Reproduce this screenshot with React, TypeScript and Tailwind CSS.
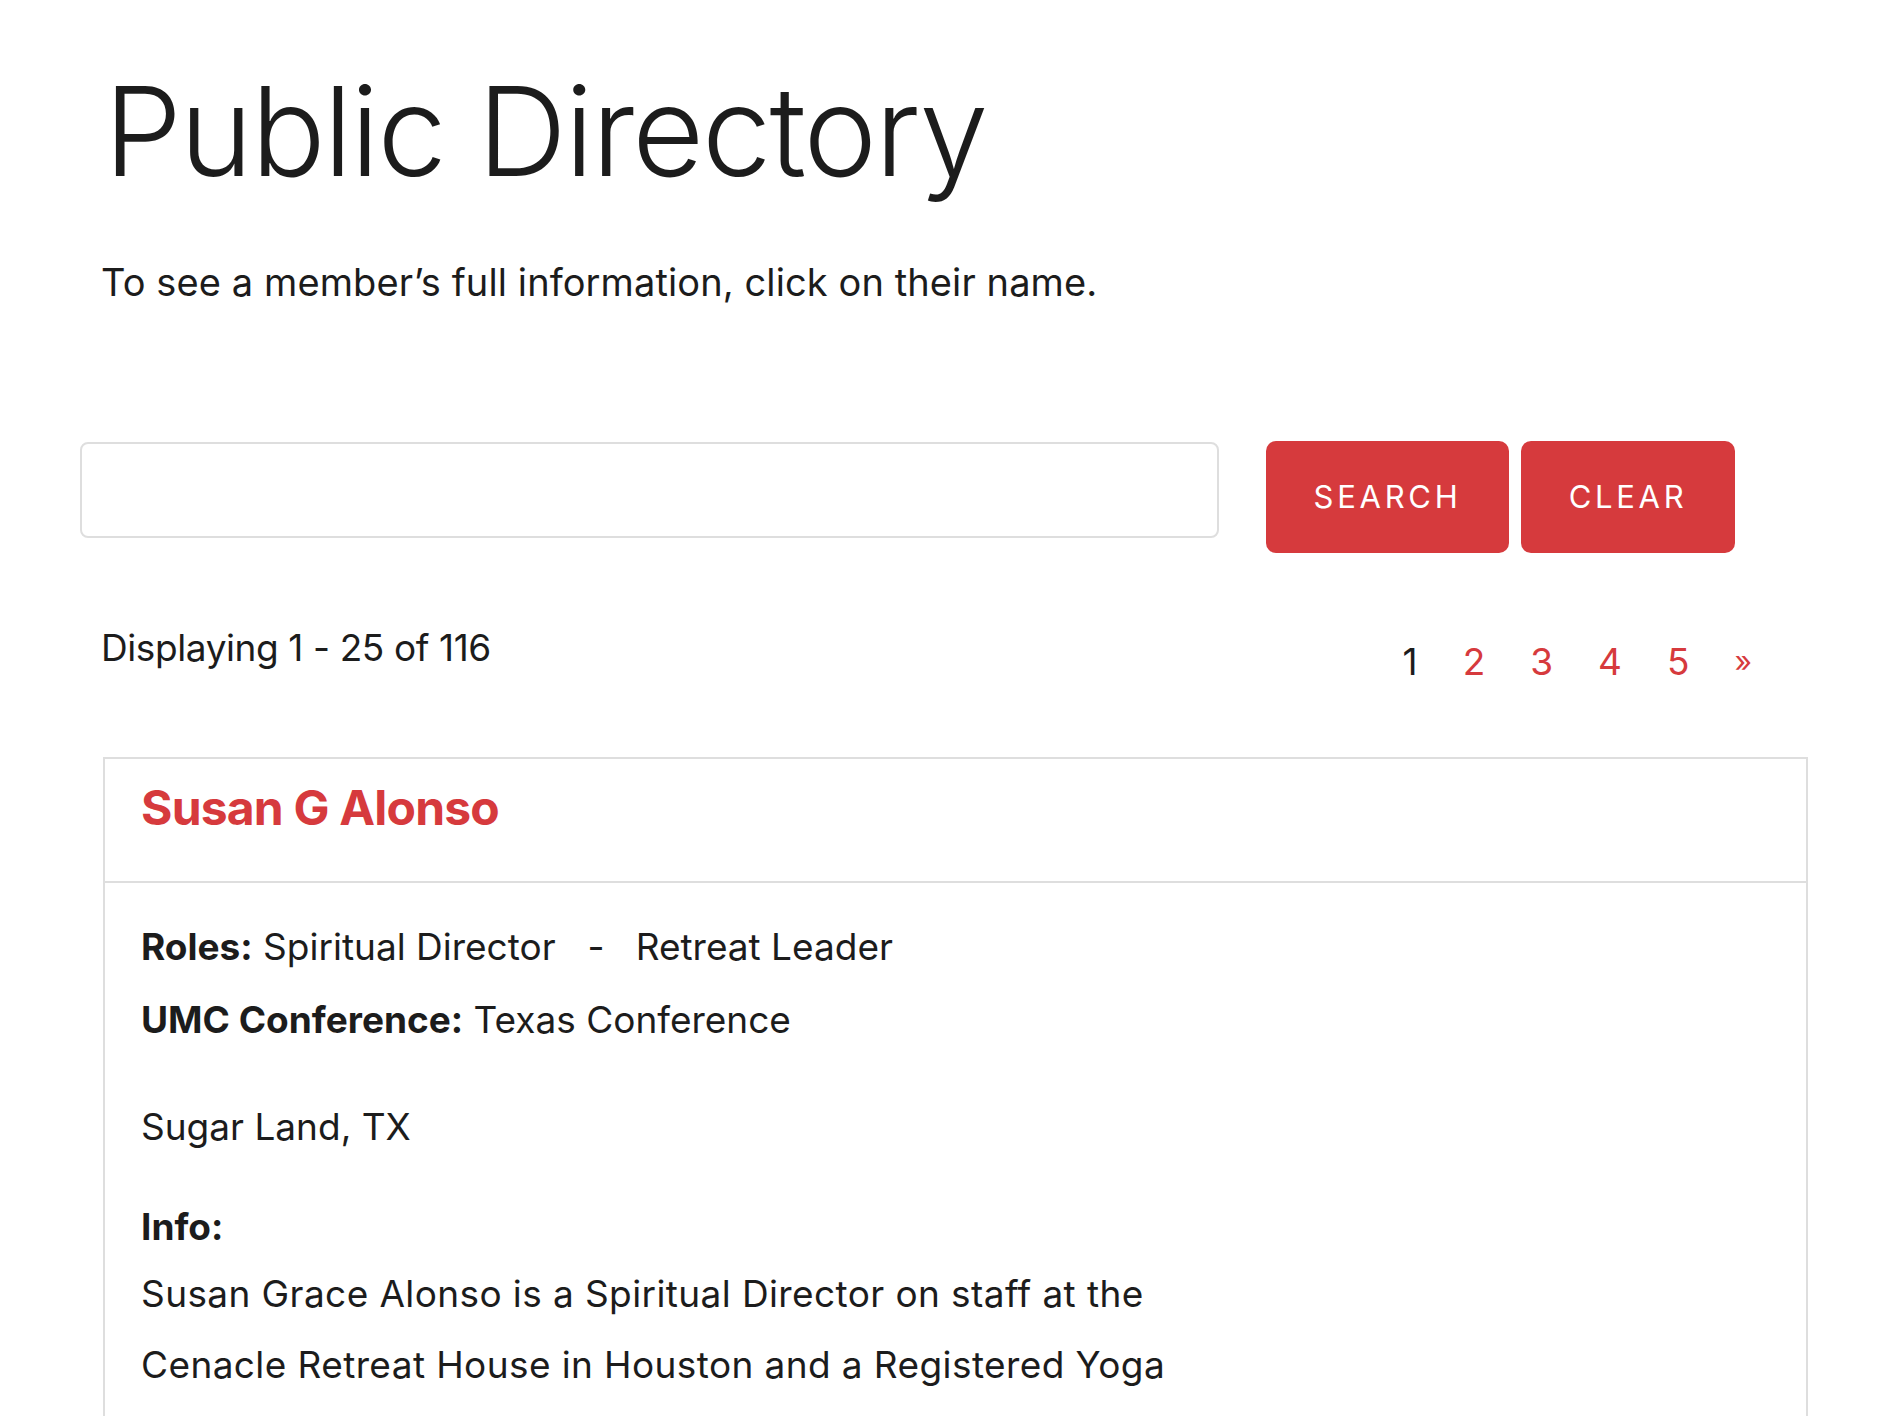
import React from "react";

const red = "text-[#d63a3d]";

const pages = ["2", "3", "4", "5"];

const InfoLine = ({ label, children }: { label: string; children: React.ReactNode }) => (
  <p className="text-[37px] leading-[37px]">
    <span className="font-bold">{label}</span> {children}
  </p>
);

export default function App() {
  return (
    <div className="min-h-screen bg-white font-['Inter',sans-serif] text-[#1c1c1c]">
      <div className="pl-[80px] pt-[69px]">
        <h1 className="ml-[24px] text-[124px] font-light leading-[124px] tracking-[-2px]">
          Public Directory
        </h1>
        <p className="ml-[21px] mt-[70px] text-[38px] leading-[38px] tracking-[0.1px]">
          To see a member’s full information, click on their name.
        </p>

        <div className="mt-[140px] flex items-start">
          <input
            type="text"
            className="mt-[1px] h-[96px] w-[1139px] rounded-[8px] border-2 border-[#dedede] bg-white outline-none"
          />
          <button className="ml-[47px] flex h-[112px] w-[243px] items-center justify-center rounded-[10px] bg-[#d63a3d] text-[31px] tracking-[0.12em] text-white">
            SEARCH
          </button>
          <button className="ml-[12px] flex h-[112px] w-[214px] items-center justify-center rounded-[10px] bg-[#d63a3d] text-[31px] tracking-[0.12em] text-white">
            CLEAR
          </button>
        </div>

        <div className="ml-[21px] mt-[76px] flex w-[1651px] items-start justify-between">
          <p className="text-[37px] leading-[37px] tracking-[-0.4px]">Displaying 1 - 25 of 116</p>
          <nav className="mt-[14px] flex items-start gap-[45px] text-[37px] leading-[37px]">
            <span>1</span>
            {pages.map((p) => (
              <a key={p} href="#" className={red}>
                {p}
              </a>
            ))}
            <a href="#" className={`text-[30px] leading-[37px] ${red}`}>
              »
            </a>
          </nav>
        </div>

        <div className="ml-[23px] mt-[77px] w-[1705px] border-2 border-[#dedede]">
          <div className="border-b-2 border-[#dedede] pb-[48px] pl-[36px] pt-[23px]">
            <h2 className={`text-[48px] font-bold leading-[51px] tracking-[-0.8px] ${red}`}>
              Susan G Alonso
            </h2>
          </div>
          <div className="pb-[60px] pl-[36px] pt-[45px]">
            <InfoLine label="Roles:">
              Spiritual Director<span className="ml-[32px] mr-[31px]">-</span>Retreat Leader
            </InfoLine>
            <div className="mt-[36px]">
              <InfoLine label="UMC Conference:">Texas Conference</InfoLine>
            </div>
            <p className="mt-[70px] text-[37px] leading-[37px]">Sugar Land, TX</p>
            <p className="mt-[63px] text-[37px] font-bold leading-[37px]">Info:</p>
            <p className="mt-[13px] text-[37px] leading-[71px] tracking-[0.4px]">
              Susan Grace Alonso is a Spiritual Director on staff at the
              <br />
              Cenacle Retreat House in Houston and a Registered Yoga
            </p>
          </div>
        </div>
      </div>
    </div>
  );
}
